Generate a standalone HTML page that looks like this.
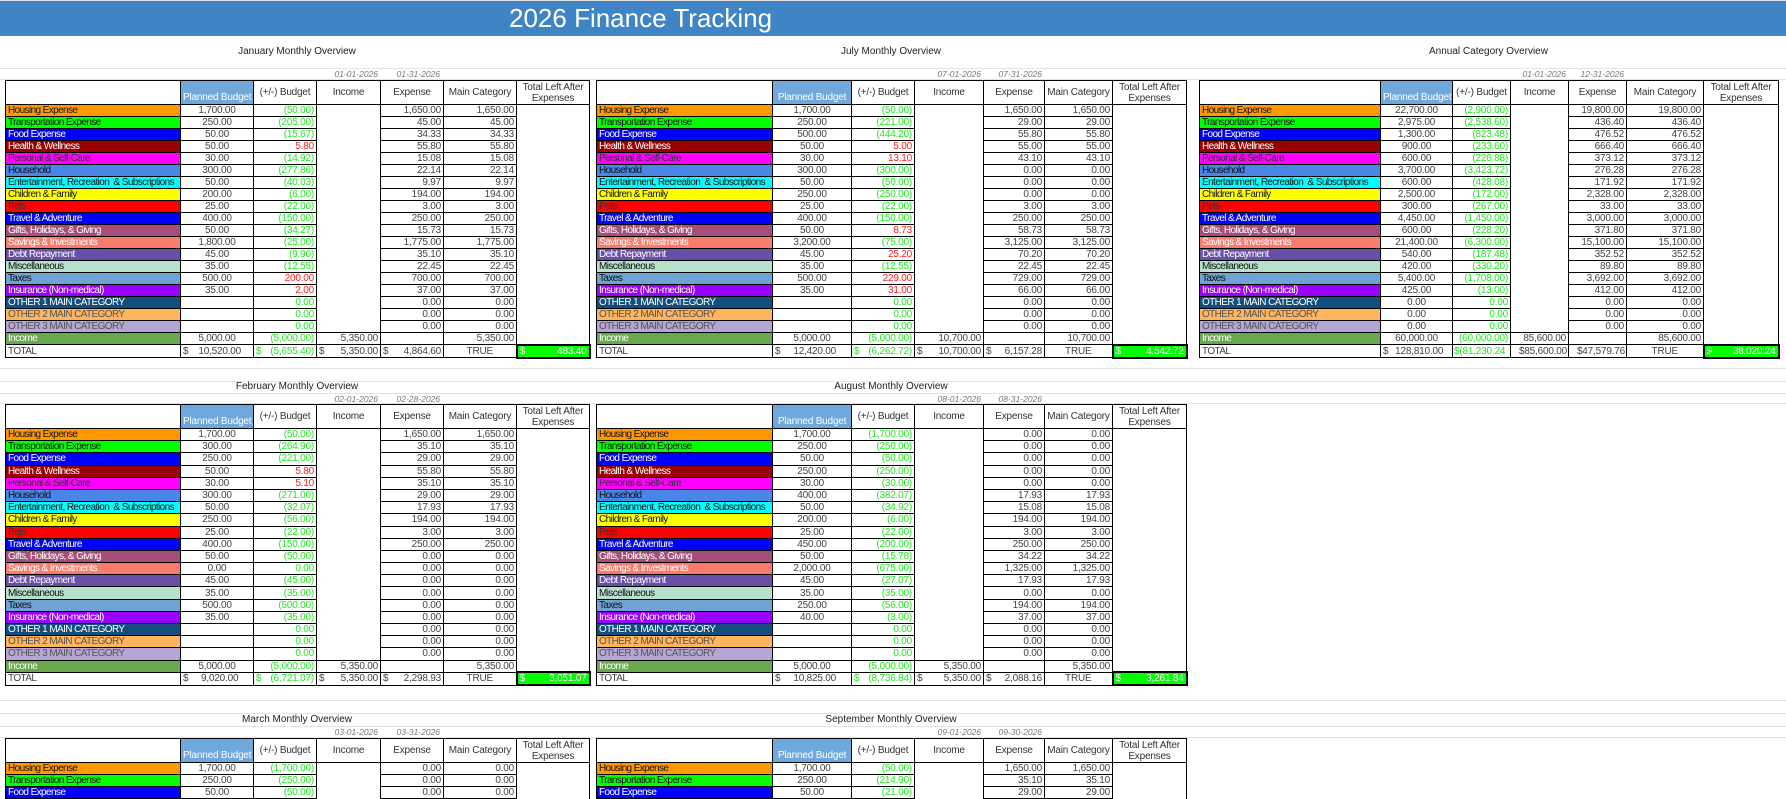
<!DOCTYPE html>
<html><head><meta charset="utf-8"><style>
*{margin:0;padding:0;box-sizing:border-box}
body{width:1786px;height:792px;overflow:hidden;background:#fff;position:relative;font-family:"Liberation Sans",sans-serif}
.band{position:absolute;left:0;top:1px;width:1786px;height:35px;background:#3f85c6}
.band span{position:absolute;left:509px;top:2px;color:#fff;font-size:26px;line-height:30px}
.ttl{position:absolute;font-size:10px;color:#222;text-align:center}
.dt{position:absolute;font-size:8.5px;color:#777;font-style:italic;text-align:right}
table{position:absolute;border-collapse:collapse;table-layout:fixed;font-size:10px;color:#444;letter-spacing:-0.2px}
td{border:1px solid #000;padding:0 2px;height:12px;line-height:11px;white-space:nowrap;overflow:hidden;text-align:right}
td:nth-child(2){text-align:center}
td:first-child{text-align:left;padding-left:2px;letter-spacing:-0.6px}
td.n{border-top:none;border-bottom:none}
tr.h td{height:23px;text-align:center;color:#333;font-size:10px;line-height:11px;vertical-align:middle}
tr.h td.pb{background:#6fa8dc;color:#fff;vertical-align:bottom;padding-bottom:1px}
tr.h td.tl{vertical-align:top;padding-top:1px;white-space:normal}
tr.t td{height:13px}
tr.t td span{float:left}
td.gr{background:#00ff00;color:#fff;border:2px solid #000}
.g{color:#22e822}.r{color:#ff2020}
.k1{background:#ff9900;color:#111}.k2{background:#00ff00;color:#111}.k3{background:#0000ff;color:#fff}.k4{background:#990000;color:#fff}.k5{background:#ff00ff;color:#333}.k6{background:#4a86e8;color:#111}.k7{background:#00ffff;color:#111}.k8{background:#ffff00;color:#111}.k9{background:#ff0000;color:#333}.k10{background:#0000ff;color:#fff}.k11{background:#a64d79;color:#fff}.k12{background:#fa7b6c;color:#fff}.k13{background:#674ea7;color:#fff}.k14{background:#b7e1cd;color:#111}.k15{background:#6fa3d3;color:#111}.k16{background:#9900ff;color:#fff}.k17{background:#134e7c;color:#fff}.k18{background:#ffb45e;color:#555}.k19{background:#b4a7d6;color:#555}.k20{background:#6aa84f;color:#fff}
.b2 td{height:12.2px}
.hl{position:absolute;left:0;width:1786px;height:1px;background:#e3e3e3}
</style></head><body>
<div class="hl" style="top:0"></div>
<div class="band"><span>2026 Finance Tracking</span></div>
<div class="hl" style="top:68px"></div><div class="hl" style="top:79px"></div>
<div class="hl" style="top:368px"></div><div class="hl" style="top:381px"></div><div class="hl" style="top:393px"></div><div class="hl" style="top:403px"></div>
<div class="hl" style="top:700px"></div><div class="hl" style="top:713px"></div><div class="hl" style="top:726px"></div><div class="hl" style="top:737px"></div>

<div class="ttl" style="left:5px;width:584px;top:46px">January Monthly Overview</div>
<div class="dt" style="left:316px;width:62px;top:69px">01-01-2026</div>
<div class="dt" style="left:380px;width:60px;top:69px">01-31-2026</div>
<div class="ttl" style="left:596px;width:590px;top:46px">July Monthly Overview</div>
<div class="dt" style="left:915px;width:66px;top:69px">07-01-2026</div>
<div class="dt" style="left:984px;width:58px;top:69px">07-31-2026</div>
<div class="ttl" style="left:1199px;width:579px;top:46px">Annual Category Overview</div>
<div class="dt" style="left:1510px;width:56px;top:69px">01-01-2026</div>
<div class="dt" style="left:1568px;width:56px;top:69px">12-31-2026</div>

<div class="ttl" style="left:5px;width:584px;top:381px">February Monthly Overview</div>
<div class="dt" style="left:316px;width:62px;top:394px">02-01-2026</div>
<div class="dt" style="left:380px;width:60px;top:394px">02-28-2026</div>
<div class="ttl" style="left:596px;width:590px;top:381px">August Monthly Overview</div>
<div class="dt" style="left:915px;width:66px;top:394px">08-01-2026</div>
<div class="dt" style="left:984px;width:58px;top:394px">08-31-2026</div>

<div class="ttl" style="left:5px;width:584px;top:714px">March Monthly Overview</div>
<div class="dt" style="left:316px;width:62px;top:727px">03-01-2026</div>
<div class="dt" style="left:380px;width:60px;top:727px">03-31-2026</div>
<div class="ttl" style="left:596px;width:590px;top:714px">September Monthly Overview</div>
<div class="dt" style="left:915px;width:66px;top:727px">09-01-2026</div>
<div class="dt" style="left:984px;width:58px;top:727px">09-30-2026</div>

<!-- JANUARY -->
<table style="left:5px;top:80px;width:584px">
<colgroup><col style="width:175px"><col style="width:73px"><col style="width:63px"><col style="width:64px"><col style="width:63px"><col style="width:73px"><col style="width:73px"></colgroup>
<tr class="h"><td></td><td class="pb">Planned Budget</td><td>(+/-) Budget</td><td>Income</td><td>Expense</td><td>Main Category</td><td class="tl">Total Left After Expenses</td></tr>
<tr><td class="k1">Housing Expense</td><td>1,700.00</td><td class="g">(50.00)</td><td class="n"></td><td>1,650.00</td><td>1,650.00</td><td class="n"></td></tr>
<tr><td class="k2">Transportation Expense</td><td>250.00</td><td class="g">(205.00)</td><td class="n"></td><td>45.00</td><td>45.00</td><td class="n"></td></tr>
<tr><td class="k3">Food Expense</td><td>50.00</td><td class="g">(15.67)</td><td class="n"></td><td>34.33</td><td>34.33</td><td class="n"></td></tr>
<tr><td class="k4">Health &amp; Wellness</td><td>50.00</td><td class="r">5.80</td><td class="n"></td><td>55.80</td><td>55.80</td><td class="n"></td></tr>
<tr><td class="k5">Personal &amp; Self-Care</td><td>30.00</td><td class="g">(14.92)</td><td class="n"></td><td>15.08</td><td>15.08</td><td class="n"></td></tr>
<tr><td class="k6">Household</td><td>300.00</td><td class="g">(277.86)</td><td class="n"></td><td>22.14</td><td>22.14</td><td class="n"></td></tr>
<tr><td class="k7">Entertainment, Recreation &nbsp;&amp; Subscriptions</td><td>50.00</td><td class="g">(40.03)</td><td class="n"></td><td>9.97</td><td>9.97</td><td class="n"></td></tr>
<tr><td class="k8">Children &amp; Family</td><td>200.00</td><td class="g">(6.00)</td><td class="n"></td><td>194.00</td><td>194.00</td><td class="n"></td></tr>
<tr><td class="k9">Pets</td><td>25.00</td><td class="g">(22.00)</td><td class="n"></td><td>3.00</td><td>3.00</td><td class="n"></td></tr>
<tr><td class="k10">Travel &amp; Adventure</td><td>400.00</td><td class="g">(150.00)</td><td class="n"></td><td>250.00</td><td>250.00</td><td class="n"></td></tr>
<tr><td class="k11">Gifts, Holidays, &amp; Giving</td><td>50.00</td><td class="g">(34.27)</td><td class="n"></td><td>15.73</td><td>15.73</td><td class="n"></td></tr>
<tr><td class="k12">Savings &amp; Investments</td><td>1,800.00</td><td class="g">(25.00)</td><td class="n"></td><td>1,775.00</td><td>1,775.00</td><td class="n"></td></tr>
<tr><td class="k13">Debt Repayment</td><td>45.00</td><td class="g">(9.90)</td><td class="n"></td><td>35.10</td><td>35.10</td><td class="n"></td></tr>
<tr><td class="k14">Miscellaneous</td><td>35.00</td><td class="g">(12.55)</td><td class="n"></td><td>22.45</td><td>22.45</td><td class="n"></td></tr>
<tr><td class="k15">Taxes</td><td>500.00</td><td class="r">200.00</td><td class="n"></td><td>700.00</td><td>700.00</td><td class="n"></td></tr>
<tr><td class="k16">Insurance (Non-medical)</td><td>35.00</td><td class="r">2.00</td><td class="n"></td><td>37.00</td><td>37.00</td><td class="n"></td></tr>
<tr><td class="k17">OTHER 1 MAIN CATEGORY</td><td></td><td class="g">0.00</td><td class="n"></td><td>0.00</td><td>0.00</td><td class="n"></td></tr>
<tr><td class="k18">OTHER 2 MAIN CATEGORY</td><td></td><td class="g">0.00</td><td class="n"></td><td>0.00</td><td>0.00</td><td class="n"></td></tr>
<tr><td class="k19">OTHER 3 MAIN CATEGORY</td><td></td><td class="g">0.00</td><td class="n"></td><td>0.00</td><td>0.00</td><td class="n"></td></tr>
<tr><td class="k20">Income</td><td>5,000.00</td><td class="g">(5,000.00)</td><td>5,350.00</td><td></td><td>5,350.00</td><td class="n"></td></tr>
<tr class="t"><td>TOTAL</td><td><span>$</span>10,520.00</td><td class="g"><span>$</span>(5,655.40)</td><td><span>$</span>5,350.00</td><td><span>$</span>4,864.60</td><td style="text-align:center">TRUE</td><td class="gr"><span>$</span>483.40</td></tr>
</table>

<!-- JULY -->
<table style="left:596px;top:80px;width:590px">
<colgroup><col style="width:176px"><col style="width:79px"><col style="width:63px"><col style="width:69px"><col style="width:61px"><col style="width:68px"><col style="width:74px"></colgroup>
<tr class="h"><td></td><td class="pb">Planned Budget</td><td>(+/-) Budget</td><td>Income</td><td>Expense</td><td>Main Category</td><td class="tl">Total Left After Expenses</td></tr>
<tr><td class="k1">Housing Expense</td><td>1,700.00</td><td class="g">(50.00)</td><td class="n"></td><td>1,650.00</td><td>1,650.00</td><td class="n"></td></tr>
<tr><td class="k2">Transportation Expense</td><td>250.00</td><td class="g">(221.00)</td><td class="n"></td><td>29.00</td><td>29.00</td><td class="n"></td></tr>
<tr><td class="k3">Food Expense</td><td>500.00</td><td class="g">(444.20)</td><td class="n"></td><td>55.80</td><td>55.80</td><td class="n"></td></tr>
<tr><td class="k4">Health &amp; Wellness</td><td>50.00</td><td class="r">5.00</td><td class="n"></td><td>55.00</td><td>55.00</td><td class="n"></td></tr>
<tr><td class="k5">Personal &amp; Self-Care</td><td>30.00</td><td class="r">13.10</td><td class="n"></td><td>43.10</td><td>43.10</td><td class="n"></td></tr>
<tr><td class="k6">Household</td><td>300.00</td><td class="g">(300.00)</td><td class="n"></td><td>0.00</td><td>0.00</td><td class="n"></td></tr>
<tr><td class="k7">Entertainment, Recreation &nbsp;&amp; Subscriptions</td><td>50.00</td><td class="g">(50.00)</td><td class="n"></td><td>0.00</td><td>0.00</td><td class="n"></td></tr>
<tr><td class="k8">Children &amp; Family</td><td>250.00</td><td class="g">(250.00)</td><td class="n"></td><td>0.00</td><td>0.00</td><td class="n"></td></tr>
<tr><td class="k9">Pets</td><td>25.00</td><td class="g">(22.00)</td><td class="n"></td><td>3.00</td><td>3.00</td><td class="n"></td></tr>
<tr><td class="k10">Travel &amp; Adventure</td><td>400.00</td><td class="g">(150.00)</td><td class="n"></td><td>250.00</td><td>250.00</td><td class="n"></td></tr>
<tr><td class="k11">Gifts, Holidays, &amp; Giving</td><td>50.00</td><td class="r">8.73</td><td class="n"></td><td>58.73</td><td>58.73</td><td class="n"></td></tr>
<tr><td class="k12">Savings &amp; Investments</td><td>3,200.00</td><td class="g">(75.00)</td><td class="n"></td><td>3,125.00</td><td>3,125.00</td><td class="n"></td></tr>
<tr><td class="k13">Debt Repayment</td><td>45.00</td><td class="r">25.20</td><td class="n"></td><td>70.20</td><td>70.20</td><td class="n"></td></tr>
<tr><td class="k14">Miscellaneous</td><td>35.00</td><td class="g">(12.55)</td><td class="n"></td><td>22.45</td><td>22.45</td><td class="n"></td></tr>
<tr><td class="k15">Taxes</td><td>500.00</td><td class="r">229.00</td><td class="n"></td><td>729.00</td><td>729.00</td><td class="n"></td></tr>
<tr><td class="k16">Insurance (Non-medical)</td><td>35.00</td><td class="r">31.00</td><td class="n"></td><td>66.00</td><td>66.00</td><td class="n"></td></tr>
<tr><td class="k17">OTHER 1 MAIN CATEGORY</td><td></td><td class="g">0.00</td><td class="n"></td><td>0.00</td><td>0.00</td><td class="n"></td></tr>
<tr><td class="k18">OTHER 2 MAIN CATEGORY</td><td></td><td class="g">0.00</td><td class="n"></td><td>0.00</td><td>0.00</td><td class="n"></td></tr>
<tr><td class="k19">OTHER 3 MAIN CATEGORY</td><td></td><td class="g">0.00</td><td class="n"></td><td>0.00</td><td>0.00</td><td class="n"></td></tr>
<tr><td class="k20">Income</td><td>5,000.00</td><td class="g">(5,000.00)</td><td>10,700.00</td><td></td><td>10,700.00</td><td class="n"></td></tr>
<tr class="t"><td>TOTAL</td><td><span>$</span>12,420.00</td><td class="g"><span>$</span>(6,262.72)</td><td><span>$</span>10,700.00</td><td><span>$</span>6,157.28</td><td style="text-align:center">TRUE</td><td class="gr"><span>$</span>4,542.72</td></tr>
</table>

<!-- ANNUAL -->
<table style="left:1199px;top:80px;width:579px">
<colgroup><col style="width:181px"><col style="width:72px"><col style="width:58px"><col style="width:58px"><col style="width:58px"><col style="width:77px"><col style="width:75px"></colgroup>
<tr class="h"><td></td><td class="pb">Planned Budget</td><td>(+/-) Budget</td><td>Income</td><td>Expense</td><td>Main Category</td><td class="tl">Total Left After Expenses</td></tr>
<tr><td class="k1">Housing Expense</td><td>22,700.00</td><td class="g">(2,900.00)</td><td class="n"></td><td>19,800.00</td><td>19,800.00</td><td class="n"></td></tr>
<tr><td class="k2">Transportation Expense</td><td>2,975.00</td><td class="g">(2,538.60)</td><td class="n"></td><td>436.40</td><td>436.40</td><td class="n"></td></tr>
<tr><td class="k3">Food Expense</td><td>1,300.00</td><td class="g">(823.48)</td><td class="n"></td><td>476.52</td><td>476.52</td><td class="n"></td></tr>
<tr><td class="k4">Health &amp; Wellness</td><td>900.00</td><td class="g">(233.60)</td><td class="n"></td><td>666.40</td><td>666.40</td><td class="n"></td></tr>
<tr><td class="k5">Personal &amp; Self-Care</td><td>600.00</td><td class="g">(226.88)</td><td class="n"></td><td>373.12</td><td>373.12</td><td class="n"></td></tr>
<tr><td class="k6">Household</td><td>3,700.00</td><td class="g">(3,423.72)</td><td class="n"></td><td>276.28</td><td>276.28</td><td class="n"></td></tr>
<tr><td class="k7">Entertainment, Recreation &nbsp;&amp; Subscriptions</td><td>600.00</td><td class="g">(428.08)</td><td class="n"></td><td>171.92</td><td>171.92</td><td class="n"></td></tr>
<tr><td class="k8">Children &amp; Family</td><td>2,500.00</td><td class="g">(172.00)</td><td class="n"></td><td>2,328.00</td><td>2,328.00</td><td class="n"></td></tr>
<tr><td class="k9">Pets</td><td>300.00</td><td class="g">(267.00)</td><td class="n"></td><td>33.00</td><td>33.00</td><td class="n"></td></tr>
<tr><td class="k10">Travel &amp; Adventure</td><td>4,450.00</td><td class="g">(1,450.00)</td><td class="n"></td><td>3,000.00</td><td>3,000.00</td><td class="n"></td></tr>
<tr><td class="k11">Gifts, Holidays, &amp; Giving</td><td>600.00</td><td class="g">(228.20)</td><td class="n"></td><td>371.80</td><td>371.80</td><td class="n"></td></tr>
<tr><td class="k12">Savings &amp; Investments</td><td>21,400.00</td><td class="g">(6,300.00)</td><td class="n"></td><td>15,100.00</td><td>15,100.00</td><td class="n"></td></tr>
<tr><td class="k13">Debt Repayment</td><td>540.00</td><td class="g">(187.48)</td><td class="n"></td><td>352.52</td><td>352.52</td><td class="n"></td></tr>
<tr><td class="k14">Miscellaneous</td><td>420.00</td><td class="g">(330.20)</td><td class="n"></td><td>89.80</td><td>89.80</td><td class="n"></td></tr>
<tr><td class="k15">Taxes</td><td>5,400.00</td><td class="g">(1,708.00)</td><td class="n"></td><td>3,692.00</td><td>3,692.00</td><td class="n"></td></tr>
<tr><td class="k16">Insurance (Non-medical)</td><td>425.00</td><td class="g">(13.00)</td><td class="n"></td><td>412.00</td><td>412.00</td><td class="n"></td></tr>
<tr><td class="k17">OTHER 1 MAIN CATEGORY</td><td>0.00</td><td class="g">0.00</td><td class="n"></td><td>0.00</td><td>0.00</td><td class="n"></td></tr>
<tr><td class="k18">OTHER 2 MAIN CATEGORY</td><td>0.00</td><td class="g">0.00</td><td class="n"></td><td>0.00</td><td>0.00</td><td class="n"></td></tr>
<tr><td class="k19">OTHER 3 MAIN CATEGORY</td><td>0.00</td><td class="g">0.00</td><td class="n"></td><td>0.00</td><td>0.00</td><td class="n"></td></tr>
<tr><td class="k20">Income</td><td>60,000.00</td><td class="g">(60,000.00)</td><td>85,600.00</td><td></td><td>85,600.00</td><td class="n"></td></tr>
<tr class="t"><td>TOTAL</td><td><span>$</span>128,810.00</td><td class="g" style="text-align:left;padding:0 0 0 1px">$(81,230.24</td><td style="padding:0 1px">$85,600.00</td><td style="padding:0 1px">$47,579.76</td><td style="text-align:center">TRUE</td><td class="gr"><span>$</span>38,020.24</td></tr>
</table>

<!-- FEBRUARY -->
<table class="b2" style="left:5px;top:404px;width:584px">
<colgroup><col style="width:175px"><col style="width:73px"><col style="width:63px"><col style="width:64px"><col style="width:63px"><col style="width:73px"><col style="width:73px"></colgroup>
<tr class="h"><td></td><td class="pb">Planned Budget</td><td>(+/-) Budget</td><td>Income</td><td>Expense</td><td>Main Category</td><td class="tl">Total Left After Expenses</td></tr>
<tr><td class="k1">Housing Expense</td><td>1,700.00</td><td class="g">(50.00)</td><td class="n"></td><td>1,650.00</td><td>1,650.00</td><td class="n"></td></tr>
<tr><td class="k2">Transportation Expense</td><td>300.00</td><td class="g">(264.90)</td><td class="n"></td><td>35.10</td><td>35.10</td><td class="n"></td></tr>
<tr><td class="k3">Food Expense</td><td>250.00</td><td class="g">(221.00)</td><td class="n"></td><td>29.00</td><td>29.00</td><td class="n"></td></tr>
<tr><td class="k4">Health &amp; Wellness</td><td>50.00</td><td class="r">5.80</td><td class="n"></td><td>55.80</td><td>55.80</td><td class="n"></td></tr>
<tr><td class="k5">Personal &amp; Self-Care</td><td>30.00</td><td class="r">5.10</td><td class="n"></td><td>35.10</td><td>35.10</td><td class="n"></td></tr>
<tr><td class="k6">Household</td><td>300.00</td><td class="g">(271.00)</td><td class="n"></td><td>29.00</td><td>29.00</td><td class="n"></td></tr>
<tr><td class="k7">Entertainment, Recreation &nbsp;&amp; Subscriptions</td><td>50.00</td><td class="g">(32.07)</td><td class="n"></td><td>17.93</td><td>17.93</td><td class="n"></td></tr>
<tr><td class="k8">Children &amp; Family</td><td>250.00</td><td class="g">(56.00)</td><td class="n"></td><td>194.00</td><td>194.00</td><td class="n"></td></tr>
<tr><td class="k9">Pets</td><td>25.00</td><td class="g">(22.00)</td><td class="n"></td><td>3.00</td><td>3.00</td><td class="n"></td></tr>
<tr><td class="k10">Travel &amp; Adventure</td><td>400.00</td><td class="g">(150.00)</td><td class="n"></td><td>250.00</td><td>250.00</td><td class="n"></td></tr>
<tr><td class="k11">Gifts, Holidays, &amp; Giving</td><td>50.00</td><td class="g">(50.00)</td><td class="n"></td><td>0.00</td><td>0.00</td><td class="n"></td></tr>
<tr><td class="k12">Savings &amp; Investments</td><td>0.00</td><td class="g">0.00</td><td class="n"></td><td>0.00</td><td>0.00</td><td class="n"></td></tr>
<tr><td class="k13">Debt Repayment</td><td>45.00</td><td class="g">(45.00)</td><td class="n"></td><td>0.00</td><td>0.00</td><td class="n"></td></tr>
<tr><td class="k14">Miscellaneous</td><td>35.00</td><td class="g">(35.00)</td><td class="n"></td><td>0.00</td><td>0.00</td><td class="n"></td></tr>
<tr><td class="k15">Taxes</td><td>500.00</td><td class="g">(500.00)</td><td class="n"></td><td>0.00</td><td>0.00</td><td class="n"></td></tr>
<tr><td class="k16">Insurance (Non-medical)</td><td>35.00</td><td class="g">(35.00)</td><td class="n"></td><td>0.00</td><td>0.00</td><td class="n"></td></tr>
<tr><td class="k17">OTHER 1 MAIN CATEGORY</td><td></td><td class="g">0.00</td><td class="n"></td><td>0.00</td><td>0.00</td><td class="n"></td></tr>
<tr><td class="k18">OTHER 2 MAIN CATEGORY</td><td></td><td class="g">0.00</td><td class="n"></td><td>0.00</td><td>0.00</td><td class="n"></td></tr>
<tr><td class="k19">OTHER 3 MAIN CATEGORY</td><td></td><td class="g">0.00</td><td class="n"></td><td>0.00</td><td>0.00</td><td class="n"></td></tr>
<tr><td class="k20">Income</td><td>5,000.00</td><td class="g">(5,000.00)</td><td>5,350.00</td><td></td><td>5,350.00</td><td class="n"></td></tr>
<tr class="t"><td>TOTAL</td><td><span>$</span>9,020.00</td><td class="g"><span>$</span>(6,721.07)</td><td><span>$</span>5,350.00</td><td><span>$</span>2,298.93</td><td style="text-align:center">TRUE</td><td class="gr"><span>$</span>3,051.07</td></tr>
</table>

<!-- AUGUST -->
<table class="b2" style="left:596px;top:404px;width:590px">
<colgroup><col style="width:176px"><col style="width:79px"><col style="width:63px"><col style="width:69px"><col style="width:61px"><col style="width:68px"><col style="width:74px"></colgroup>
<tr class="h"><td></td><td class="pb">Planned Budget</td><td>(+/-) Budget</td><td>Income</td><td>Expense</td><td>Main Category</td><td class="tl">Total Left After Expenses</td></tr>
<tr><td class="k1">Housing Expense</td><td>1,700.00</td><td class="g">(1,700.00)</td><td class="n"></td><td>0.00</td><td>0.00</td><td class="n"></td></tr>
<tr><td class="k2">Transportation Expense</td><td>250.00</td><td class="g">(250.00)</td><td class="n"></td><td>0.00</td><td>0.00</td><td class="n"></td></tr>
<tr><td class="k3">Food Expense</td><td>50.00</td><td class="g">(50.00)</td><td class="n"></td><td>0.00</td><td>0.00</td><td class="n"></td></tr>
<tr><td class="k4">Health &amp; Wellness</td><td>250.00</td><td class="g">(250.00)</td><td class="n"></td><td>0.00</td><td>0.00</td><td class="n"></td></tr>
<tr><td class="k5">Personal &amp; Self-Care</td><td>30.00</td><td class="g">(30.00)</td><td class="n"></td><td>0.00</td><td>0.00</td><td class="n"></td></tr>
<tr><td class="k6">Household</td><td>400.00</td><td class="g">(382.07)</td><td class="n"></td><td>17.93</td><td>17.93</td><td class="n"></td></tr>
<tr><td class="k7">Entertainment, Recreation &nbsp;&amp; Subscriptions</td><td>50.00</td><td class="g">(34.92)</td><td class="n"></td><td>15.08</td><td>15.08</td><td class="n"></td></tr>
<tr><td class="k8">Children &amp; Family</td><td>200.00</td><td class="g">(6.00)</td><td class="n"></td><td>194.00</td><td>194.00</td><td class="n"></td></tr>
<tr><td class="k9">Pets</td><td>25.00</td><td class="g">(22.00)</td><td class="n"></td><td>3.00</td><td>3.00</td><td class="n"></td></tr>
<tr><td class="k10">Travel &amp; Adventure</td><td>450.00</td><td class="g">(200.00)</td><td class="n"></td><td>250.00</td><td>250.00</td><td class="n"></td></tr>
<tr><td class="k11">Gifts, Holidays, &amp; Giving</td><td>50.00</td><td class="g">(15.78)</td><td class="n"></td><td>34.22</td><td>34.22</td><td class="n"></td></tr>
<tr><td class="k12">Savings &amp; Investments</td><td>2,000.00</td><td class="g">(675.00)</td><td class="n"></td><td>1,325.00</td><td>1,325.00</td><td class="n"></td></tr>
<tr><td class="k13">Debt Repayment</td><td>45.00</td><td class="g">(27.07)</td><td class="n"></td><td>17.93</td><td>17.93</td><td class="n"></td></tr>
<tr><td class="k14">Miscellaneous</td><td>35.00</td><td class="g">(35.00)</td><td class="n"></td><td>0.00</td><td>0.00</td><td class="n"></td></tr>
<tr><td class="k15">Taxes</td><td>250.00</td><td class="g">(56.00)</td><td class="n"></td><td>194.00</td><td>194.00</td><td class="n"></td></tr>
<tr><td class="k16">Insurance (Non-medical)</td><td>40.00</td><td class="g">(3.00)</td><td class="n"></td><td>37.00</td><td>37.00</td><td class="n"></td></tr>
<tr><td class="k17">OTHER 1 MAIN CATEGORY</td><td></td><td class="g">0.00</td><td class="n"></td><td>0.00</td><td>0.00</td><td class="n"></td></tr>
<tr><td class="k18">OTHER 2 MAIN CATEGORY</td><td></td><td class="g">0.00</td><td class="n"></td><td>0.00</td><td>0.00</td><td class="n"></td></tr>
<tr><td class="k19">OTHER 3 MAIN CATEGORY</td><td></td><td class="g">0.00</td><td class="n"></td><td>0.00</td><td>0.00</td><td class="n"></td></tr>
<tr><td class="k20">Income</td><td>5,000.00</td><td class="g">(5,000.00)</td><td>5,350.00</td><td></td><td>5,350.00</td><td class="n"></td></tr>
<tr class="t"><td>TOTAL</td><td><span>$</span>10,825.00</td><td class="g"><span>$</span>(8,736.84)</td><td><span>$</span>5,350.00</td><td><span>$</span>2,088.16</td><td style="text-align:center">TRUE</td><td class="gr"><span>$</span>3,261.84</td></tr>
</table>

<!-- MARCH -->
<table style="left:5px;top:738px;width:584px">
<colgroup><col style="width:175px"><col style="width:73px"><col style="width:63px"><col style="width:64px"><col style="width:63px"><col style="width:73px"><col style="width:73px"></colgroup>
<tr class="h"><td></td><td class="pb">Planned Budget</td><td>(+/-) Budget</td><td>Income</td><td>Expense</td><td>Main Category</td><td class="tl">Total Left After Expenses</td></tr>
<tr><td class="k1">Housing Expense</td><td>1,700.00</td><td class="g">(1,700.00)</td><td class="n"></td><td>0.00</td><td>0.00</td><td class="n"></td></tr>
<tr><td class="k2">Transportation Expense</td><td>250.00</td><td class="g">(250.00)</td><td class="n"></td><td>0.00</td><td>0.00</td><td class="n"></td></tr>
<tr><td class="k3">Food Expense</td><td>50.00</td><td class="g">(50.00)</td><td class="n"></td><td>0.00</td><td>0.00</td><td class="n"></td></tr>
</table>

<!-- SEPTEMBER -->
<table style="left:596px;top:738px;width:590px">
<colgroup><col style="width:176px"><col style="width:79px"><col style="width:63px"><col style="width:69px"><col style="width:61px"><col style="width:68px"><col style="width:74px"></colgroup>
<tr class="h"><td></td><td class="pb">Planned Budget</td><td>(+/-) Budget</td><td>Income</td><td>Expense</td><td>Main Category</td><td class="tl">Total Left After Expenses</td></tr>
<tr><td class="k1">Housing Expense</td><td>1,700.00</td><td class="g">(50.00)</td><td class="n"></td><td>1,650.00</td><td>1,650.00</td><td class="n"></td></tr>
<tr><td class="k2">Transportation Expense</td><td>250.00</td><td class="g">(214.90)</td><td class="n"></td><td>35.10</td><td>35.10</td><td class="n"></td></tr>
<tr><td class="k3">Food Expense</td><td>50.00</td><td class="g">(21.00)</td><td class="n"></td><td>29.00</td><td>29.00</td><td class="n"></td></tr>
</table>
</body></html>
